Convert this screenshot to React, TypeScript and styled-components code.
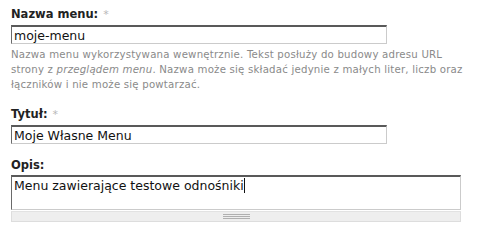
import React from "react";
import styled, { createGlobalStyle } from "styled-components";

const Global = createGlobalStyle`
  html, body { margin: 0; padding: 0; background: #fff; }
  body { font-family: "DejaVu Sans", Verdana, sans-serif; color: #222; }
`;

const Form = styled.div`
  padding: 6px 0 0 11px;
  width: 471px;
  box-sizing: border-box;
`;

const FormItem = styled.div<{ $gap?: number }>`
  display: flex;
  flex-direction: column;
  margin-bottom: ${(p) => p.$gap ?? 0}px;
`;

const Label = styled.label`
  display: block;
  font-size: 11.5px;
  font-weight: bold;
  line-height: 16px;
  color: #222;
  margin-bottom: 2px;
`;

const Req = styled.span`
  font-weight: normal;
  color: #b8b8b8;
  font-size: 11px;
  margin-left: 5px;
`;

const Input = styled.input<{ $w: number }>`
  box-sizing: border-box;
  width: ${(p) => p.$w}px;
  height: 19px;
  margin: 0;
  padding: 0 0 0 2px;
  font-family: "DejaVu Sans", Verdana, sans-serif;
  font-size: 12.5px;
  color: #111;
  background: #fff;
  border-style: solid;
  border-width: 2px 1px 1px 1px;
  border-color: #595959 #cbcbcb #cbcbcb #6a6a6a;
  outline: none;
`;

const Description = styled.div`
  font-size: 10.2px;
  line-height: 15px;
  color: #8a8a8a;
  margin-top: 3px;
  letter-spacing: 0.2px;
  em { font-style: italic; }
`;

const AreaWrap = styled.div`
  width: 450px;
  display: flex;
  flex-direction: column;
`;

const TextArea = styled.div`
  box-sizing: border-box;
  height: 35px;
  padding: 1px 2px;
  font-size: 12.5px;
  line-height: 16px;
  color: #111;
  background: #fff;
  border-style: solid;
  border-width: 2px 1px 1px 1px;
  border-color: #595959 #cbcbcb #cbcbcb #6a6a6a;
  white-space: pre-wrap;
`;

const Caret = styled.span`
  display: inline-block;
  width: 1px;
  height: 15px;
  background: #111;
  vertical-align: -3px;
`;

const Grippie = styled.div`
  box-sizing: border-box;
  height: 11px;
  margin-top: 1px;
  background: #eeeeee;
  border: 1px solid #dddddd;
  border-top-color: #e2e2e2;
  display: flex;
  align-items: center;
  justify-content: center;
`;

const Grip = styled.div`
  width: 27px;
  height: 5px;
  background: repeating-linear-gradient(
    to bottom,
    #b0b0b0 0px,
    #b0b0b0 1px,
    transparent 1px,
    transparent 2px
  );
`;

export default function App() {
  return (
    <>
      <Global />
      <Form>
        <FormItem $gap={14}>
          <Label htmlFor="menu-name">
            Nazwa menu:<Req>*</Req>
          </Label>
          <Input id="menu-name" $w={376} defaultValue="moje-menu" />
          <Description>
            Nazwa menu wykorzystywana wewnętrznie. Tekst posłuży do budowy adresu URL
            <br />
            strony z <em>przeglądem menu</em>. Nazwa może się składać jedynie z małych liter, liczb oraz
            <br />
            łączników i nie może się powtarzać.
          </Description>
        </FormItem>
        <FormItem $gap={13}>
          <Label htmlFor="menu-title">
            Tytuł:<Req>*</Req>
          </Label>
          <Input id="menu-title" $w={376} defaultValue="Moje Własne Menu" />
        </FormItem>
        <FormItem>
          <Label>Opis:</Label>
          <AreaWrap>
            <TextArea role="textbox">
              Menu zawierające testowe odnośniki
              <Caret />
            </TextArea>
            <Grippie>
              <Grip />
            </Grippie>
          </AreaWrap>
        </FormItem>
      </Form>
    </>
  );
}
